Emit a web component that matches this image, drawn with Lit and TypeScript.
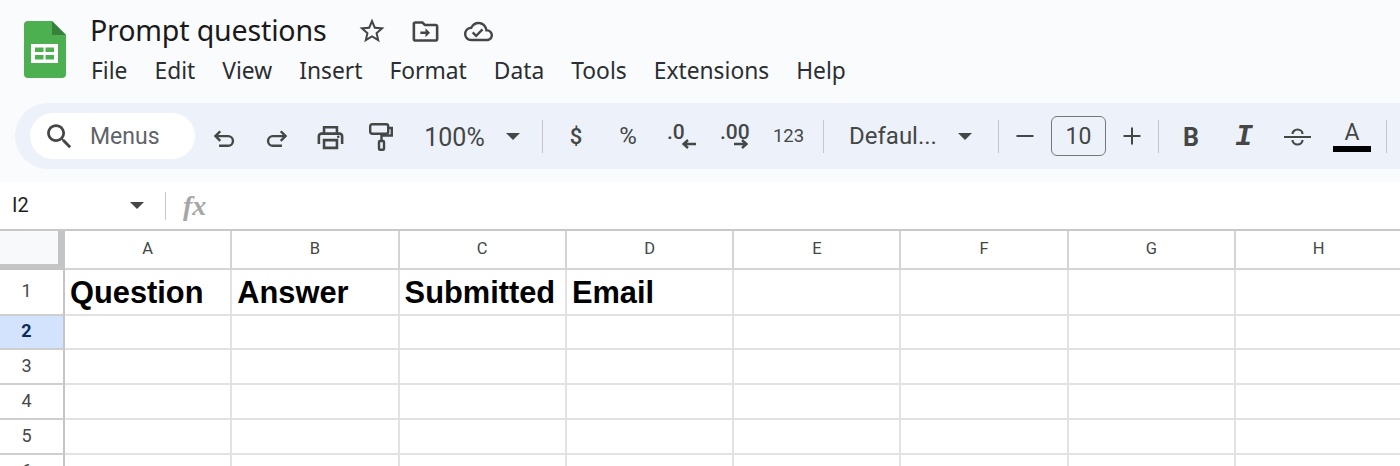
import { LitElement, html, css, svg } from 'lit';
import { customElement } from 'lit/decorators.js';

const COLUMNS = ['A', 'B', 'C', 'D', 'E', 'F', 'G', 'H'];
const HEADINGS = ['Question', 'Answer', 'Submitted', 'Email'];
const MENUS = ['File', 'Edit', 'View', 'Insert', 'Format', 'Data', 'Tools', 'Extensions', 'Help'];

const icon = (content: unknown, cls: string, box = '0 0 24 24') => html`
  <svg class=${cls} viewBox=${box} aria-hidden="true">${content}</svg>
`;

const caret = () => icon(svg`<path d="M0 0h14L7 7z" />`, 'caret', '0 0 14 7');

@customElement('app-root')
export class AppRoot extends LitElement {
  static styles = css`
    :host {
      display: block;
      width: 1400px;
      height: 466px;
      overflow: hidden;
      background: #fff;
      font-family: Roboto, 'Noto Sans', sans-serif;
      color: #444746;
    }

    svg {
      display: block;
      flex: none;
      fill: #444746;
    }

    .top {
      height: 182px;
      background: #f9fbfd;
      box-sizing: border-box;
      padding-top: 13px;
    }

    .title-row {
      display: flex;
      height: 90px;
      padding-left: 24px;
    }

    .logo {
      width: 42px;
      height: 57px;
      margin-top: 8px;
    }

    .title-col {
      margin-left: 24px;
    }

    .title-line {
      display: flex;
      align-items: center;
      height: 36px;
    }

    .title {
      padding-bottom: 4px;
      font-family: 'Noto Sans', sans-serif;
      font-size: 28.600px;
      color: #1a1a1a;
      letter-spacing: -0.18px;
      white-space: nowrap;
    }

    .doc-icons {
      display: flex;
      align-items: center;
      gap: 23px;
      margin-left: 31px;
    }

    .star {
      width: 30px;
      height: 30px;
    }

    .folder {
      width: 31px;
      height: 31px;
    }

    .cloud {
      width: 29px;
      height: 29px;
    }

    .menus {
      display: flex;
      gap: 27px;
      margin: 7px 0 0 1px;
      font-family: 'Noto Sans', sans-serif;
      font-size: 22.800px;
      line-height: 29px;
      color: #2b2e31;
    }

    .toolbar {
      display: flex;
      align-items: center;
      height: 66px;
      margin-left: 15px;
      padding-left: 15px;
      border-radius: 33px 0 0 33px;
      background: #edf2fa;
    }

    .search {
      display: flex;
      align-items: center;
      width: 165px;
      height: 46px;
      margin-right: 3px;
      box-sizing: border-box;
      padding-left: 13px;
      border-radius: 23px;
      background: #fff;
      font-size: 23px;
      color: #5f6368;
    }

    .search svg {
      width: 33px;
      height: 33px;
      margin-right: 14px;
    }

    .tool {
      display: flex;
      align-items: center;
      justify-content: center;
      flex: none;
      height: 46px;
      white-space: nowrap;
      font-size: 21px;
      color: #444746;
    }

    .line-icon {
      width: 29px;
      height: 29px;
      margin-top: 4px;
      fill: none;
      stroke: #444746;
      stroke-width: 2;
    }

    .print-icon {
      width: 31px;
      height: 31px;
      margin-top: 3px;
    }

    .roller-icon {
      width: 24px;
      height: 28px;
      margin-top: 2px;
      fill: none;
      stroke: #444746;
      stroke-width: 2.400;
    }

    .w46 { width: 46px; }
    .w52 { width: 52px; }
    .w56 { width: 56px; }
    .w101 { width: 101px; }
    .w16 { width: 16px; }

    .caret {
      width: 14px;
      height: 7px;
    }

    .divider {
      flex: none;
      width: 1px;
      height: 33px;
      background: #c7c7c7;
    }

    .zoom {
      padding-top: 3px;
      box-sizing: border-box;
      font-size: 25px;
    }

    .after-zoom {
      margin-left: 21px;
    }

    .money {
      width: 56px;
      margin-left: 5px;
      font-size: 22px;
      font-weight: 500;
    }

    .percent {
      width: 48px;
      font-size: 24px;
    }

    .decimal {
      position: relative;
      width: 56px;
      box-sizing: border-box;
      justify-content: flex-start;
      padding-left: 15px;
      font-weight: 500;
      font-size: 21px;
    }

    .decimal span {
      margin-top: -9px;
    }

    .decimal svg {
      position: absolute;
      top: 26px;
      left: 30px;
      width: 14px;
      height: 10px;
    }

    .decimal.more {
      padding-left: 12px;
    }

    .decimal.more svg {
      left: 26px;
    }

    .num {
      width: 49px;
      margin-right: 10px;
      font-size: 18.500px;
    }

    .font-name {
      width: 125px;
      margin-right: 5px;
      justify-content: flex-start;
      padding-left: 25px;
      box-sizing: border-box;
      font-size: 24px;
    }

    .w-caret {
      width: 22px;
      margin-right: 22px;
    }

    .step {
      width: 52px;
    }

    .step svg {
      width: 20px;
      height: 20px;
      fill: none;
      stroke: #444746;
      stroke-width: 2;
    }

    .size {
      display: flex;
      align-items: center;
      justify-content: center;
      flex: none;
      width: 53px;
      height: 38px;
      border: 1px solid #747775;
      border-radius: 6px;
      font-size: 23px;
    }

    .bold {
      width: 64px;
      padding-top: 2px;
      box-sizing: border-box;
      font-weight: 700;
      font-size: 25px;
    }

    .italic {
      width: 42px;
      padding-top: 2px;
      box-sizing: border-box;
      font-family: 'Liberation Mono', monospace;
      font-weight: 700;
      font-style: italic;
      font-size: 30px;
    }

    .strike {
      width: 64px;
      padding-top: 1px;
      box-sizing: border-box;
    }

    .strike svg {
      width: 27px;
      height: 20px;
      fill: none;
      stroke: #444746;
      stroke-width: 2.200;
    }

    .text-color {
      flex-direction: column;
      width: 46px;
      font-size: 23px;
      line-height: 24px;
    }

    .text-color i {
      display: block;
      width: 38px;
      height: 6px;
      margin-top: 1px;
      background: #000;
    }

    .last-divider {
      margin-left: 11px;
    }

    .formula {
      display: flex;
      align-items: center;
      height: 47px;
      box-sizing: border-box;
      padding-left: 12px;
    }

    .name-box {
      width: 118px;
      padding-bottom: 2px;
      font-size: 20px;
      color: #1f1f1f;
    }

    .formula .divider {
      height: 28px;
      margin-left: 21px;
    }

    .fx {
      margin-left: 17px;
      font-family: 'Liberation Serif', serif;
      font-style: italic;
      font-weight: 700;
      font-size: 28px;
      color: #a6a6a6;
    }

    .sheet {
      display: grid;
      grid-template-columns: 65px repeat(8, 167.300px);
      grid-template-rows: 38.500px 46px 34.800px 34.800px 34.800px 34.800px 34.800px;
      border-top: 2px solid #c8c8c8;
    }

    .cell,
    .col,
    .row {
      box-sizing: border-box;
      min-width: 0;
    }

    .corner {
      border-right: 7px solid #c4c4c4;
      border-bottom: 6px solid #c4c4c4;
      background: #f8f9fa;
    }

    .col {
      display: flex;
      align-items: center;
      justify-content: center;
      padding-bottom: 1px;
      border-right: 2px solid #d4d4d4;
      border-bottom: 2px solid #d4d4d4;
      font-size: 16.500px;
      color: #444746;
    }

    .row {
      display: flex;
      align-items: center;
      justify-content: center;
      padding: 0 10px 2px 0;
      border-right: 2px solid #c4c4c4;
      border-bottom: 2px solid #cfcfcf;
      font-size: 18px;
      color: #444746;
    }

    .row.active {
      background: #d3e3fd;
      color: #0b2a5c;
      font-weight: 700;
    }

    .cell {
      display: flex;
      align-items: center;
      padding: 3px 0 0 5px;
      border-right: 2px solid #e2e2e2;
      border-bottom: 2px solid #e2e2e2;
      font-family: 'Liberation Sans', Arial, sans-serif;
      font-weight: 700;
      font-size: 30.800px;
      color: #000;
      white-space: nowrap;
      overflow: hidden;
    }
  `;

  private renderLogo() {
    return html`
      <svg class="logo" viewBox="0 0 42 57" aria-hidden="true">
        <path d="M4 0h24l14 14v39a4 4 0 0 1-4 4H4a4 4 0 0 1-4-4V4a4 4 0 0 1 4-4z" fill="#4caf50" />
        <path d="M28 0l14 14H28z" fill="#38813c" />
        <path d="M7 23h27v19H7z" fill="#fff" />
        <path d="M11 26.500h8.500v4.500H11zM21.500 26.500H30v4.500h-8.500zM11 34h8.500v4.500H11zM21.500 34H30v4.500h-8.500z" fill="#4caf50" />
      </svg>
    `;
  }

  private renderToolbar() {
    return html`
      <div class="toolbar">
        <div class="search">
          ${icon(svg`<path d="M15.500 14h-.79l-.28-.27C15.410 12.590 16 11.110 16 9.500 16 5.910 13.090 3 9.500 3S3 5.910 3 9.500 5.910 16 9.500 16c1.610 0 3.090-.59 4.230-1.570l.27.28v.79l5 4.990L20.490 19l-4.990-5zm-6 0C7.010 14 5 11.990 5 9.500S7.010 5 9.500 5 14 7.010 14 9.500 11.990 14 9.500 14z" />`, '')}
          Menus
        </div>
        <div class="tool w52">${icon(svg`<path d="M8.500 6 4.500 10l4 4M4.500 10H15a4 4 0 0 1 0 8H7.500" />`, 'line-icon')}</div>
        <div class="tool w52">${icon(svg`<path d="M15.500 6l4 4-4 4M19.500 10H9a4 4 0 0 0 0 8h7.500" />`, 'line-icon')}</div>
        <div class="tool w56">
          ${icon(svg`<path d="M19 8h-1V3H6v5H5c-1.660 0-3 1.340-3 3v6h4v4h12v-4h4v-6c0-1.660-1.340-3-3-3zM8 5h8v3H8V5zm8 14H8v-4h8v4zm4-2h-2v-4H6v4H4v-6c0-.55.45-1 1-1h14c.55 0 1 .45 1 1v6z" /><circle cx="18" cy="11.500" r="1" />`, 'print-icon')}
        </div>
        <div class="tool w46">
          ${icon(svg`<rect x="1.200" y="1.200" width="18" height="9.600" rx="2" /><path d="M19 5h3.800v7.500H12.500V18" /><rect x="10" y="18" width="5" height="8.800" rx="1" />`, 'roller-icon', '0 0 24 28')}
        </div>
        <div class="tool w101 zoom">100%</div>
        <div class="tool w16">${caret()}</div>
        <div class="divider after-zoom"></div>
        <div class="tool money">$</div>
        <div class="tool percent">%</div>
        <div class="tool decimal">
          <span>.0</span>
          ${icon(svg`<path d="M6 1 1.500 5 6 9M2 5h12" fill="none" stroke="#444746" stroke-width="2.400" />`, '', '0 0 14 10')}
        </div>
        <div class="tool decimal more">
          <span>.00</span>
          ${icon(svg`<path d="M8 1l4.500 4L8 9M0 5h12" fill="none" stroke="#444746" stroke-width="2.400" />`, '', '0 0 14 10')}
        </div>
        <div class="tool num">123</div>
        <div class="divider"></div>
        <div class="tool font-name">Defaul...</div>
        <div class="tool w-caret">${caret()}</div>
        <div class="divider"></div>
        <div class="tool step">${icon(svg`<path d="M1.500 10h17" />`, '', '0 0 20 20')}</div>
        <div class="size">10</div>
        <div class="tool step">${icon(svg`<path d="M1.500 10h17M10 1.500v17" />`, '', '0 0 20 20')}</div>
        <div class="divider"></div>
        <div class="tool bold">B</div>
        <div class="tool italic">I</div>
        <div class="tool strike">
          ${icon(svg`<path d="M0 10h27M8.500 7a5 4.500 0 0 1 10 0M8.500 13a5 4.500 0 0 0 10 0" />`, '', '0 0 27 20')}
        </div>
        <div class="tool text-color">A<i></i></div>
        <div class="divider last-divider"></div>
      </div>
    `;
  }

  render() {
    return html`
      <div class="top">
        <div class="title-row">
          ${this.renderLogo()}
          <div class="title-col">
            <div class="title-line">
              <div class="title">Prompt questions</div>
              <div class="doc-icons">
                ${icon(svg`<path d="M22 9.240l-7.190-.62L12 2 9.190 8.630 2 9.240l5.460 4.730L5.820 21 12 17.270 18.180 21l-1.630-7.030L22 9.240zM12 15.400l-3.760 2.270 1-4.280-3.320-2.880 4.380-.38L12 6.100l1.710 4.040 4.380.38-3.320 2.880 1 4.280L12 15.400z" />`, 'star')}
                ${icon(svg`<path d="M20 6h-8l-2-2H4c-1.100 0-2 .9-2 2v12c0 1.100.9 2 2 2h16c1.100 0 2-.9 2-2V8c0-1.100-.9-2-2-2zm0 12H4V6h5.170l2 2H20v10zm-8-4H8v-2h4V9.500l3.500 3.500-3.500 3.500V14z" />`, 'folder')}
                ${icon(svg`<path d="M19.350 10.040C18.670 6.590 15.640 4 12 4 9.110 4 6.600 5.640 5.350 8.040 2.340 8.360 0 10.910 0 14c0 3.310 2.690 6 6 6h13c2.760 0 5-2.240 5-5 0-2.640-2.050-4.780-4.650-4.960zM19 18H6c-2.210 0-4-1.790-4-4 0-2.050 1.530-3.760 3.560-3.970l1.070-.11.5-.95C8.080 7.140 9.940 6 12 6c2.620 0 4.880 1.860 5.390 4.430l.3 1.500 1.530.11c1.560.1 2.780 1.410 2.780 2.960 0 1.650-1.350 3-3 3zm-9-3.820l-2.090-2.090L6.500 13.500 10 17l6.010-6.010-1.410-1.410z" />`, 'cloud')}
              </div>
            </div>
            <div class="menus">${MENUS.map((m) => html`<span>${m}</span>`)}</div>
          </div>
        </div>
        ${this.renderToolbar()}
      </div>
      <div class="formula">
        <div class="name-box">I2</div>
        ${caret()}
        <div class="divider"></div>
        <div class="fx">fx</div>
      </div>
      <div class="sheet">
        <div class="corner"></div>
        ${COLUMNS.map((c) => html`<div class="col">${c}</div>`)}
        ${[1, 2, 3, 4, 5, 6].map(
          (n) => html`
            <div class="row ${n === 2 ? 'active' : ''}">${n}</div>
            ${COLUMNS.map((_, i) => html`<div class="cell">${n === 1 ? HEADINGS[i] ?? '' : ''}</div>`)}
          `
        )}
      </div>
    `;
  }
}
